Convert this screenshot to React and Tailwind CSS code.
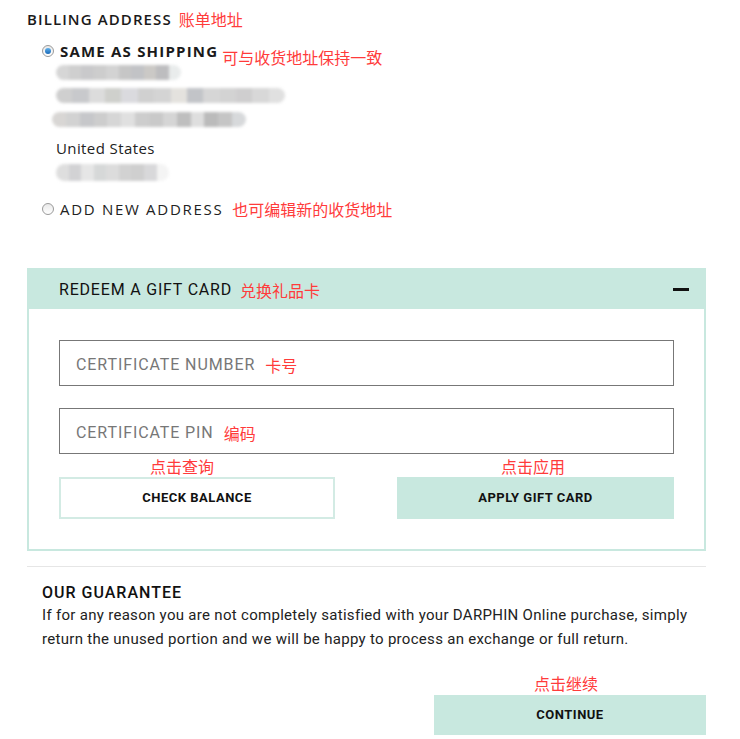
import React, { useState } from 'react';

const mint = 'bg-[#c8e8df]';

const Radio = ({ checked }) => (
  <span className="relative inline-flex h-[12px] w-[12px] shrink-0 items-center justify-center rounded-full border border-[#9a9a9a] bg-gradient-to-b from-[#e9e9e9] to-[#ffffff]">
    {checked && (
      <span className="h-[6px] w-[6px] rounded-full bg-gradient-to-b from-[#5fb0ea] to-[#1668b8]" />
    )}
  </span>
);

// blurred private address lines
const Blur = ({ width, shades, className = '' }) => (
  <div className={`flex h-[15px] overflow-hidden rounded-full blur-[1.5px] ${className}`} style={{ width }}>
    {shades.map((c, i) => (
      <div key={i} className="h-full flex-1" style={{ background: c }} />
    ))}
  </div>
);

const Note = ({ children, className = '' }) => (
  <span className={`text-[16px] leading-none text-[#ff3b3b] ${className}`} style={{ fontFamily: '"Noto Sans CJK SC", sans-serif' }}>
    {children}
  </span>
);

const App = () => {
  const [sameAsShipping] = useState(true);
  const geo = { fontFamily: '"Open Sans", "DejaVu Sans", sans-serif' };
  const cond = { fontFamily: 'Roboto, "Liberation Sans", sans-serif' };

  return (
    <div className="w-[740px] bg-white pb-[4px] text-[#1a1a1a]">
      {/* Billing */}
      <div className="pl-[27px] pt-[9px]" style={geo}>
        <div className="flex h-[20px] items-center">
          <span className="text-[15px] font-semibold tracking-[1.1px]">BILLING ADDRESS</span>
          <Note className="ml-[7px]">账单地址</Note>
        </div>

        <div className="pl-[15px]">
          <div className="mt-[12px] flex h-[20px] items-center">
            <Radio checked={sameAsShipping} />
            <span className="ml-[6px] text-[15px] font-bold tracking-[1.2px]">SAME AS SHIPPING</span>
            <Note className="ml-[4px] mt-[12px]">可与收货地址保持一致</Note>
          </div>

          <div className="mt-[4px] pl-[14px]">
            <Blur width="125px" shades={['#d6d6d6', '#cfcfcf', '#c9c9cb', '#cdcdcd', '#d3d3d3', '#c6c6c6', '#c2c3c6', '#cbc9c6', '#bdbdbf', '#e9ecec']} />
            <Blur width="229px" className="mt-[8px]" shades={['#cfcfcf', '#c8c9cc', '#dcdcdc', '#cfd0cc', '#dadade', '#d0d0d0', '#d4d4d4', '#e4e2de', '#c2c4c8', '#d6d6d6', '#d3d3d3', '#cfcecf', '#d8d8d8', '#e0e0e0']} />
            <Blur width="194px" className="-ml-[4px] mt-[9px]" shades={['#d8d6d4', '#d2d2d2', '#c6c7ca', '#cdcdcd', '#d6d6d6', '#e0e0e0', '#cdcdcd', '#c9c9c9', '#d5d5d5', '#bebebe', '#dedede', '#bbbbbb', '#c5c5c5', '#d7d9db']} />
            <div className="mt-[11px] text-[15px] leading-[20px] tracking-[0.4px] text-[#222]">United States</div>
            <Blur width="113px" className="mt-[6px] h-[17px]" shades={['#dedede', '#d2d2d4', '#e6e6e6', '#d6d8d8', '#dcdcdc', '#d2d2d2', '#cfcfcf', '#d8d8da', '#f4f4f4']} />
          </div>

          <div className="mt-[18px] flex h-[20px] items-center">
            <Radio checked={!sameAsShipping} />
            <span className="ml-[6px] text-[15px] tracking-[1.7px] text-[#222]">ADD NEW ADDRESS</span>
            <Note className="ml-[9px]">也可编辑新的收货地址</Note>
          </div>
        </div>
      </div>

      {/* Gift card */}
      <div className="ml-[27px] mr-[34px] mt-[49px] border-2 border-[#c8e8df]" style={cond}>
        <div className={`flex h-[39px] items-center justify-between ${mint} pl-[30px] pr-[15px]`}>
          <div className="flex items-center">
            <span className="text-[16px] tracking-[0.8px] text-[#111]">REDEEM A GIFT CARD</span>
            <Note className="ml-[8px]">兑换礼品卡</Note>
          </div>
          <span className="h-[3px] w-[16px] bg-[#111]" />
        </div>

        <div className="px-[30px] pb-[30px] pt-[31px]">
          <div className="flex h-[46px] items-center border border-[#777] pl-[16px] pt-[3px]">
            <span className="text-[16px] tracking-[0.9px] text-[#777]">CERTIFICATE NUMBER</span>
            <Note className="ml-[10px]">卡号</Note>
          </div>
          <div className="mt-[22px] flex h-[46px] items-center border border-[#777] pl-[16px] pt-[3px]">
            <span className="text-[16px] tracking-[0.9px] text-[#777]">CERTIFICATE PIN</span>
            <Note className="ml-[10px]">编码</Note>
          </div>

          <div className="flex h-[23px] items-center">
            <Note className="ml-[91px]">点击查询</Note>
            <Note className="ml-[287px]">点击应用</Note>
          </div>

          <div className="flex justify-between">
            <button className="h-[42px] w-[276px] border-2 border-[#d3ebe4] bg-white text-[13px] font-bold tracking-[0.5px] text-[#111]">
              CHECK BALANCE
            </button>
            <button className={`h-[42px] w-[277px] ${mint} text-[13px] font-bold tracking-[0.5px] text-[#111]`}>
              APPLY GIFT CARD
            </button>
          </div>
        </div>
      </div>

      {/* Guarantee */}
      <div className="ml-[27px] mr-[34px] mt-[15px] border-t border-[#e6e6e6] px-[15px] pt-[16px]" style={cond}>
        <div className="text-[16px] font-medium leading-[20px] tracking-[1px] text-[#111]">OUR GUARANTEE</div>
        <p className="text-[15px] leading-[24px] tracking-[0.3px] text-[#222]">
          If for any reason you are not completely satisfied with your DARPHIN Online purchase, simply return the unused portion and we will be happy to process an exchange or full return.
        </p>
      </div>

      <div className="ml-[34px] mr-[34px] mt-[24px] flex flex-col items-end" style={cond}>
        <Note className="mr-[108px]">点击继续</Note>
        <button className={`mt-[4px] h-[40px] w-[272px] ${mint} text-[13px] font-bold tracking-[0.5px] text-[#111]`}>
          CONTINUE
        </button>
      </div>
    </div>
  );
};

export default App;
